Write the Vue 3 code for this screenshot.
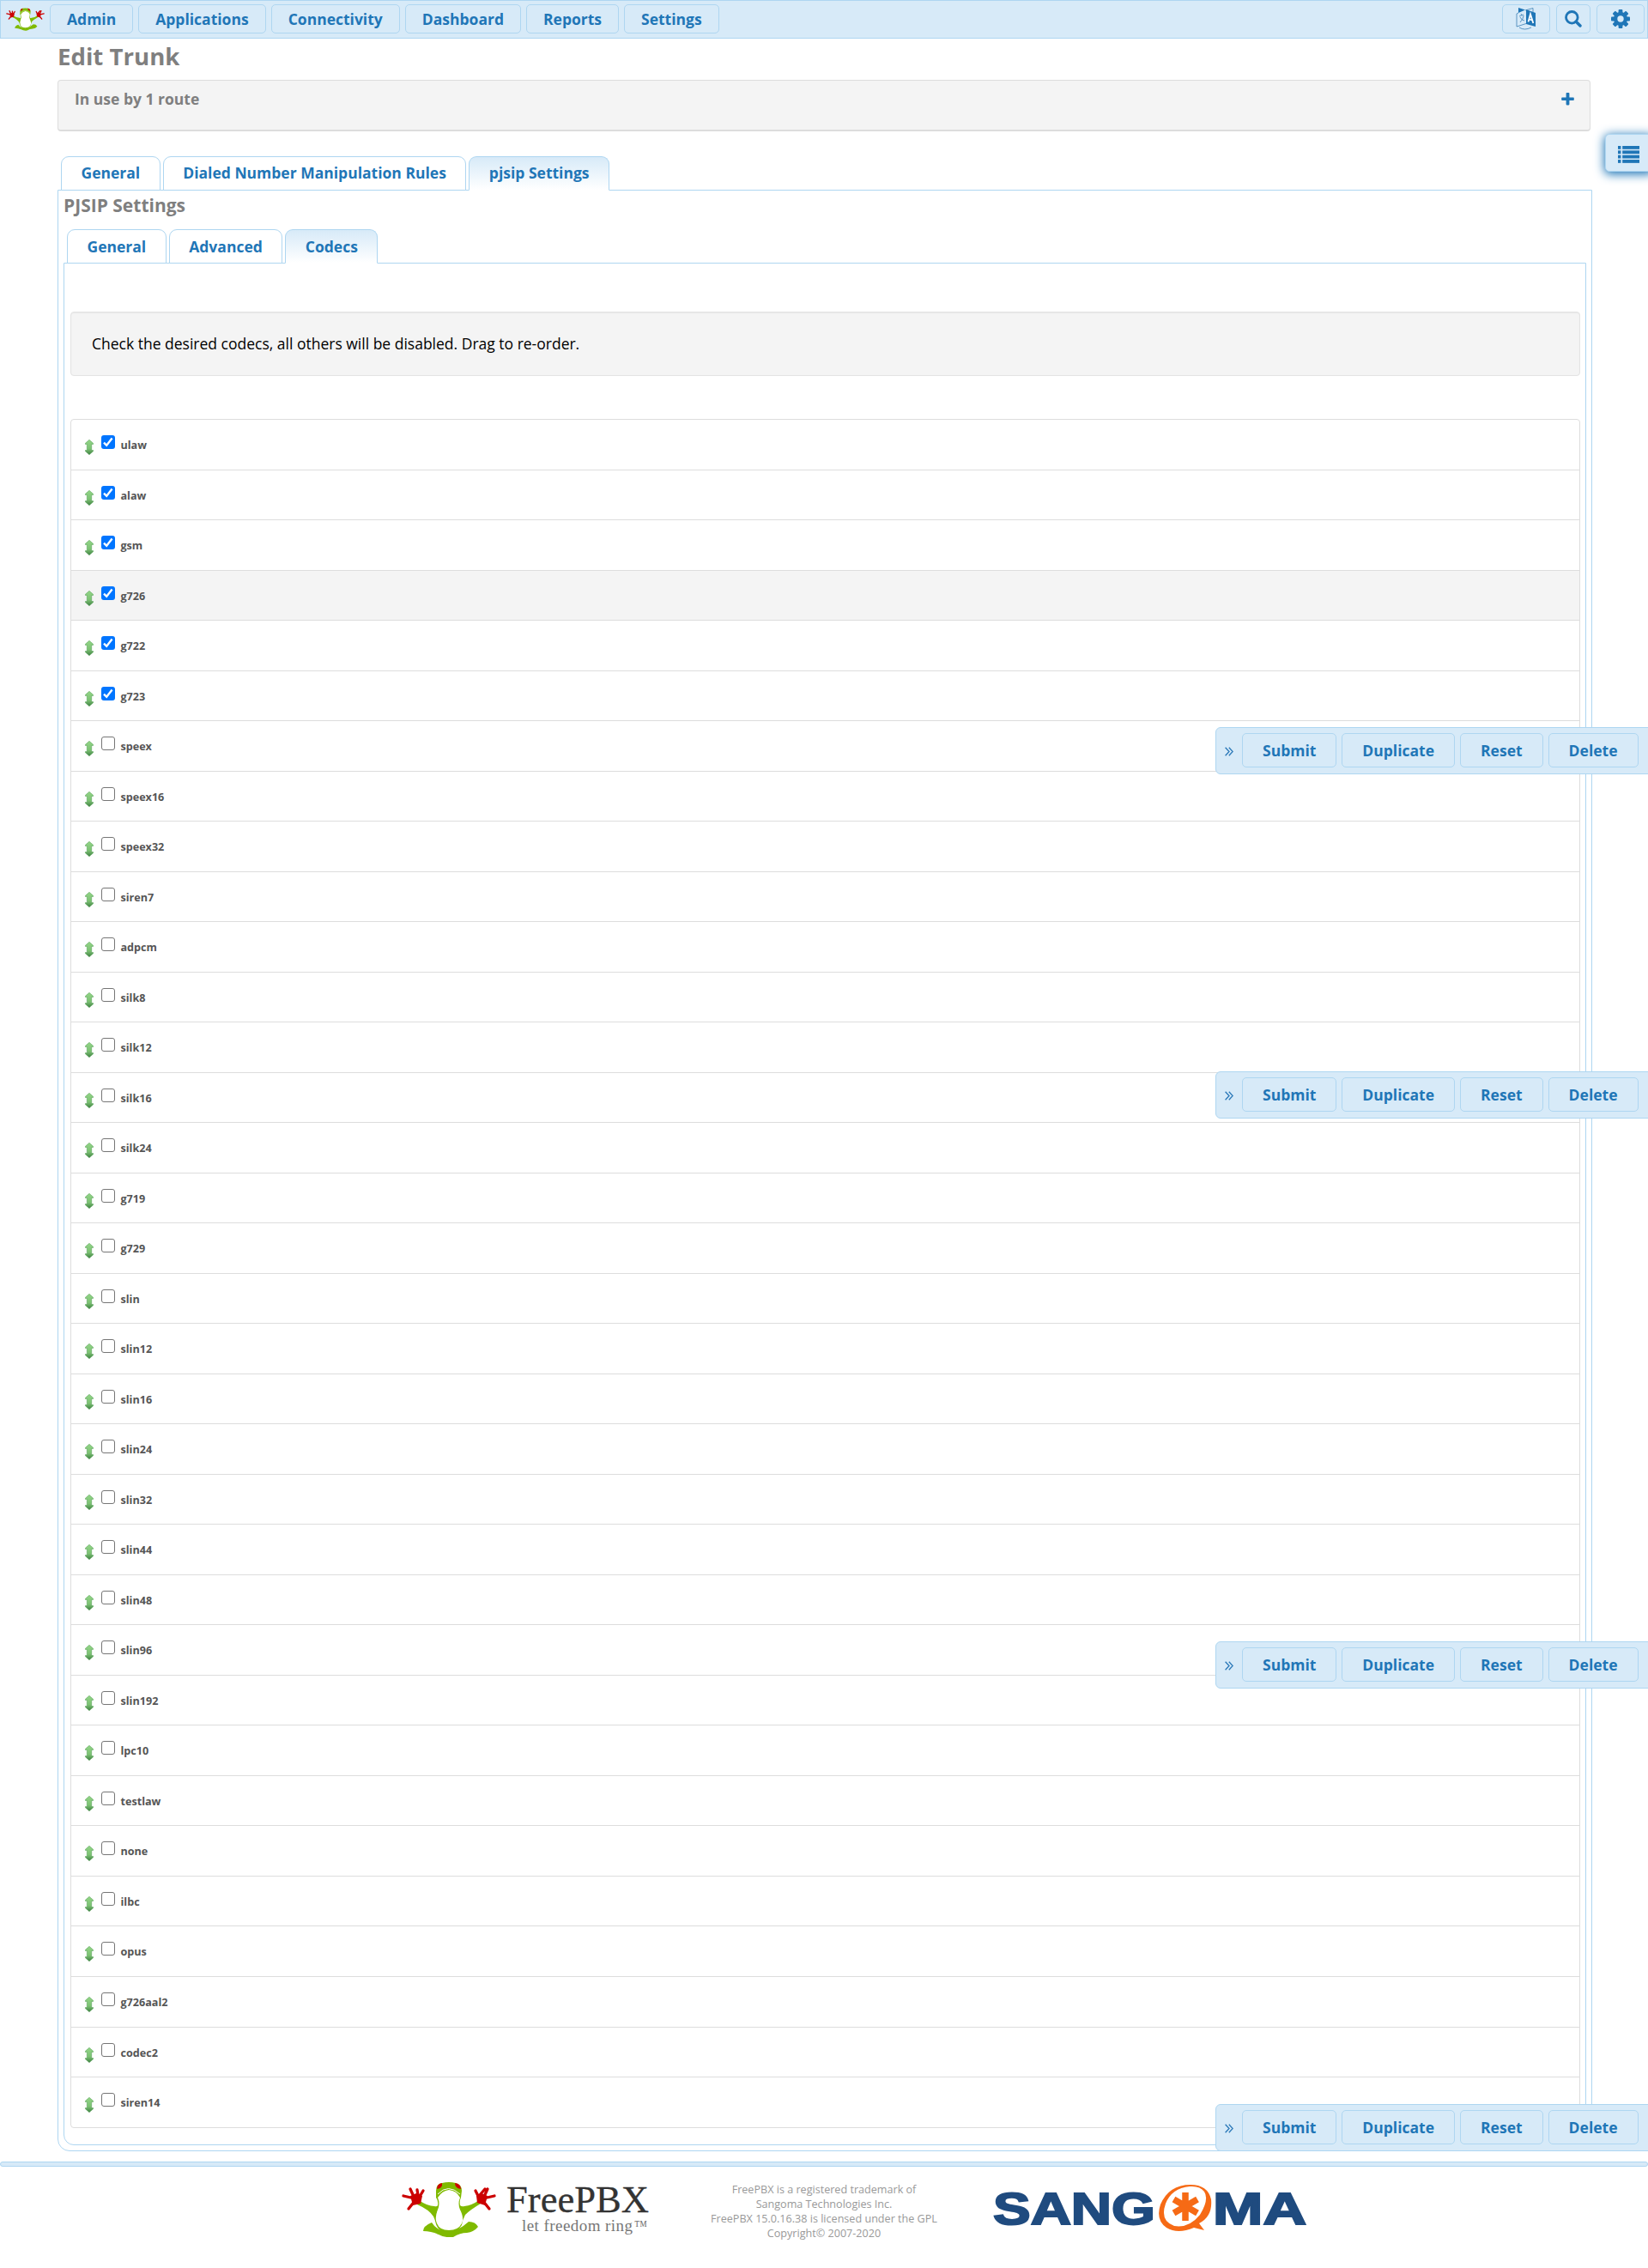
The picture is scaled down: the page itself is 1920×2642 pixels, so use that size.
<script setup>
const menu = ['Admin', 'Applications', 'Connectivity', 'Dashboard', 'Reports', 'Settings']
const trunkTabs = ['General', 'Dialed Number Manipulation Rules', 'pjsip Settings']
const pjsipTabs = ['General', 'Advanced', 'Codecs']
const actions = ['Submit', 'Duplicate', 'Reset', 'Delete']
const barOffsets = [847, 1248, 1912, 2451]
const enabled = ['ulaw', 'alaw', 'gsm', 'g726', 'g722', 'g723']
const codecs = [
  ...enabled, 'speex', 'speex16', 'speex32', 'siren7', 'adpcm', 'silk8', 'silk12', 'silk16',
  'silk24', 'g719', 'g729', 'slin', 'slin12', 'slin16', 'slin24', 'slin32', 'slin44', 'slin48',
  'slin96', 'slin192', 'lpc10', 'testlaw', 'none', 'ilbc', 'opus', 'g726aal2', 'codec2', 'siren14',
].map((name) => ({ name, on: enabled.includes(name) }))
</script>

<template>
  <div class="page">
    <svg width="0" height="0" class="defs">
      <defs>
        <linearGradient id="arrow" x1="0" y1="0" x2="0" y2="1">
          <stop offset="0" stop-color="#93d587" /><stop offset=".6" stop-color="#7cc273" /><stop offset="1" stop-color="#3f7f42" />
        </linearGradient>
        <symbol id="frog" viewBox="0 0 110 64">
          <path fill="#7fba00" d="M20 21 Q30 28 38 28 Q41 29 42 27 Q43 22 40 18 L40 10 Q40 2 47 1 Q55 -1 63 1 Q70 3 70 10 L69 18 Q67 22 68 27 Q70 29 73 28 Q82 27 90 21 L92 25 Q80 32 74 38 Q71 43 70 50 Q64 60 55 59 Q44 60 40 49 Q39 44 37 40 Q32 32 18 26 Z" />
          <path fill="#7fba00" d="M25 57 Q25 51 35 47 Q41 57 55 58 Q67 56 78 46 Q86 46 89 52 Q84 58 76 59 Q68 59 60 64 Q50 65 43 61 Q35 57 25 57 Z" />
          <path fill="#fff" d="M42 18 Q47 10 55 9 Q64 10 68 18 Q65 25 68 32 Q73 42 70 48 Q66 56 55 56 Q44 56 41 48 Q38 42 42 32 Q45 25 42 18 Z" />
          <path fill="none" stroke="#fff" stroke-width="1" d="M42 14 Q54 1 68 14" />
          <path fill="#c00" d="M41 8 Q41 2 47 1 Q48 7 41 8 M69 8 Q69 2 62 1 Q62 7 69 8" />
          <g fill="none" stroke="#c00" stroke-width="3.3" stroke-linecap="round" stroke-linejoin="round">
            <path d="M2 16 L15 19 L10 8 M17 17 L19 15 L18 9 M19 20 L25 10 M16 21 L8 31" />
            <path d="M108 16 L95 19 L100 8 M93 17 L91 15 L97 8 M91 20 L86 10 M94 21 L102 31" />
          </g>
          <path fill="#c00" d="M10 16 L17 13 L24 16 L22 25 L13 27 Z M100 16 L93 13 L87 16 L88 24 L97 27 Z" />
        </symbol>
      </defs>
    </svg>

    <header class="nav">
      <svg class="nav-frog"><use href="#frog" /></svg>
      <nav class="menu"><a v-for="m in menu" :key="m" class="btn">{{ m }}</a></nav>
      <div class="tools">
        <a class="tool wide">
          <svg width="24" height="26" viewBox="0 0 24 26">
            <path fill="#1f76b7" d="M3 0 L11 2.5 L3 6Z M12 2 L23 6 V22 L12 19Z" />
            <path fill="none" stroke="#3b7fb4" stroke-width=".8" d="M11 3 L20 .5 V5 M3 6 L1 7 V22 L12 18.5 M4 23 Q10 27 18 23 M4 10 L9 8 M6 7 L7 9 M5 17 Q9 13 9 9 M5 11 Q7 15 10 15" />
            <path fill="none" stroke="#fff" stroke-width="1.8" d="M14.5 16.5 L17 7.5 L20.3 18 M15.5 13.5 L19 14.5" />
          </svg>
        </a>
        <a class="tool">
          <svg width="20" height="20" viewBox="0 0 20 20" fill="none" stroke="#1f76b7"><circle cx="8.3" cy="8.3" r="6.8" stroke-width="2.8" /><path d="M13.2 13.2 L18 18" stroke-width="3.4" stroke-linecap="round" /></svg>
        </a>
        <a class="tool wide">
          <svg width="22" height="22" viewBox="-11 -11 22 22">
            <g fill="#1f76b7"><rect v-for="a in 4" :key="a" x="-2.4" y="-11" width="4.8" height="22" rx="1" :transform="`rotate(${a * 45})`" /></g>
            <circle r="5.9" fill="none" stroke="#1f76b7" stroke-width="4.4" /><circle r="3.7" fill="#d7eaf8" />
          </svg>
        </a>
      </div>
    </header>

    <main class="content">
      <h1>Edit Trunk</h1>
      <section class="usage">
        <span>In use by 1 route</span>
        <svg width="15" height="15" viewBox="0 0 15 15"><path fill="#1f76b7" d="M5.6 .8 Q5.6 0 6.4 0 H8.6 Q9.4 0 9.4 .8 V5.4 H14 Q14.8 5.4 14.8 6.2 V8.2 Q14.8 9 14 9 H9.4 V13.6 Q9.4 14.4 8.6 14.4 H6.4 Q5.6 14.4 5.6 13.6 V9 H1 Q.2 9 .2 8.2 V6.2 Q.2 5.4 1 5.4 H5.6Z" /></svg>
      </section>

      <ul class="tabs outer">
        <li v-for="(t, i) in trunkTabs" :key="t" :class="{ active: i === 2 }">{{ t }}</li>
      </ul>
      <section class="pane">
        <h2>PJSIP Settings</h2>
        <ul class="tabs inner">
          <li v-for="(t, i) in pjsipTabs" :key="t" :class="{ active: i === 2 }">{{ t }}</li>
        </ul>
        <div class="subpane">
          <div class="well">Check the desired codecs, all others will be disabled. Drag to re-order.</div>
          <ul class="codecs">
            <li v-for="c in codecs" :key="c.name" :class="{ hover: c.name === 'g726' }">
              <svg class="drag" width="10" height="18" viewBox="0 0 10 18"><path fill="url(#arrow)" stroke="#4f9a50" stroke-width=".5" d="M5 .3 L9.7 4.4 V5.400 H7.700 V12.600 H9.7 V13.600 L5 17.7 L.3 13.600 V12.600 H2.300 V5.400 H.3 V4.4Z" /></svg>
              <span class="check" :class="{ on: c.on }">
                <svg v-if="c.on" width="16" height="16" viewBox="0 0 16 16"><path fill="none" stroke="#fff" stroke-width="2.4" d="M3 8.6 L6.2 11.8 L12.6 3.6" /></svg>
              </span>
              <span class="name">{{ c.name }}</span>
            </li>
          </ul>
        </div>
      </section>
    </main>

    <footer>
      <div class="stripe"></div>
      <div class="brand">
        <svg class="freepbx" width="292" height="70" viewBox="0 0 292 70">
          <use href="#frog" x="0" y="0" width="110" height="64" />
          <g font-family="'Liberation Serif', serif">
            <text x="122" y="34.5" font-size="44" fill="#333" stroke="#333" stroke-width=".3" textLength="166" lengthAdjust="spacingAndGlyphs">FreePBX</text>
            <text x="140" y="57" font-size="19" fill="#777" textLength="129" lengthAdjust="spacing">let freedom ring</text>
            <text x="271" y="57" font-size="18" fill="#777" textLength="15" lengthAdjust="spacingAndGlyphs">™</text>
          </g>
        </svg>
        <p>FreePBX is a registered trademark of<br>Sangoma Technologies Inc.<br>FreePBX 15.0.16.38 is licensed under the GPL<br>Copyright© 2007-2020</p>
        <svg class="sangoma" width="366" height="60" viewBox="0 0 366 60">
          <g font-family="'Liberation Sans', sans-serif" font-weight="700" font-size="52" fill="#1f4b7f" stroke="#1f4b7f" stroke-width="2">
            <text x="0" y="48.500" textLength="189" lengthAdjust="spacingAndGlyphs">SANG</text>
            <text x="256" y="48.500" textLength="109" lengthAdjust="spacingAndGlyphs">MA</text>
          </g>
          <path fill="#f66a15" fill-rule="evenodd" d="M230 3 Q250 3 254 20 Q256 40 240 48 L246 56 L234 53 Q215 61 202 53 Q189 44 195 26 Q205 3 230 3Z M229 5 Q208 7 201 25 Q194 45 211 51 Q228 54 241 38 Q252 20 246 11 Q241 4 229 5Z" />
          <g stroke="#f66a15" stroke-width="7.5"><path d="M224 12 V45 M210.500 20 L238 36 M238 20 L210.500 36" /></g>
        </svg>
      </div>
    </footer>

    <a class="side-toggle">
      <svg width="25" height="20" viewBox="0 0 25 20" fill="#1f76b7"><g v-for="n in 4" :key="n"><rect x="0" :y="(n - 1) * 5.35" width="3.4" height="3.8" /><rect x="5.200" :y="(n - 1) * 5.35" width="19.8" height="3.8" /></g></svg>
    </a>
    <div v-for="y in barOffsets" :key="y" class="actions" :style="{ top: y + 'px' }">
      <svg width="10" height="11" viewBox="0 0 10 11" fill="none" stroke="#2a78b8" stroke-width="1.3"><path d="M.6 .8 L5 5.500 L.6 10.200 M4.800 .8 L9.200 5.500 L4.800 10.200" /></svg>
      <a v-for="a in actions" :key="a" class="btn">{{ a }}</a>
    </div>
  </div>
</template>

<style>
body { margin: 0; background: #fff; }
</style>

<style scoped>
* { box-sizing: border-box; }
.page { position: relative; width: 1920px; height: 2642px; overflow: hidden; background: #fff; font-family: "Open Sans", sans-serif; font-size: 17.5px; line-height: 26px; color: #000; }
.defs { position: absolute; }
ul, h1, h2, p { margin: 0; padding: 0; list-style: none; }
.nav { display: flex; align-items: flex-start; height: 45px; padding: 4px 3px 0 6px; background: #d7eaf8; border: 1px solid #aed6f1; }
.nav-frog { width: 45px; height: 27px; margin: 4px 6px 0 0; }
.menu { display: flex; gap: 6px; }
.btn { display: block; height: 34px; padding: 0 19px; border: 1px solid #aed6f1; border-radius: 5px; font-weight: 700; line-height: 33px; color: #1f76b7; white-space: nowrap; }
.tools { display: flex; gap: 7px; margin-left: auto; }
.tool { display: flex; align-items: center; justify-content: center; width: 40px; height: 34px; border: 1px solid #aed6f1; border-radius: 5px; }
.tool.wide { width: 56px; }
.content { padding: 0 65px 0 67px; }
h1 { height: 48px; font-size: 27.6px; font-weight: 700; line-height: 40px; color: #7f7f7f; }
.usage { display: flex; justify-content: space-between; width: 1786px; height: 60px; padding: 8px 18px 0 19px; border: 1px solid #ddd; border-bottom-width: 2px; border-radius: 4px; background: #f4f4f4; font-weight: 700; color: #7f7f7f; }
.usage svg { margin-top: 6px; }
.tabs { position: relative; z-index: 1; display: flex; gap: 3px; margin-left: 4px; margin-bottom: -1px; }
.tabs li { height: 40px; padding: 0 22.5px; border: 1px solid #aed6f1; border-radius: 9px 9px 0 0; background: #fff; font-weight: 700; line-height: 37px; color: #1f76b7; }
.tabs li.active { background: linear-gradient(#d7eaf8, #fff); border-bottom-color: #fff; }
.outer { margin-top: 29px; }
.inner li { line-height: 38px; }
.pane { width: 1788px; height: 2285px; padding: 0 6px; border: 1px solid #aed6f1; border-radius: 0 0 14px 14px; }
h2 { height: 45px; font-size: 21px; font-weight: 700; line-height: 35px; color: #7f7f7f; }
.subpane { width: 1774px; height: 2193px; padding: 56px 6px 0 7px; border: 1px solid #aed6f1; border-radius: 0 0 12px 12px; }
.well { height: 75px; margin-bottom: 50px; padding: 23px 24px; border: 1px solid #e3e3e3; border-radius: 4px; background: #f4f4f4; box-shadow: inset 0 1px 1px rgba(0,0,0,.05); }
.codecs { display: flex; flex-direction: column; }
.codecs li { display: flex; height: 59.52px; flex: none; margin-bottom: -1px; padding-left: 16px; border: 1px solid #ddd; background: #fff; }
.codecs li:first-child { border-radius: 4px 4px 0 0; }
.codecs li:last-child { border-radius: 0 0 4px 4px; }
.codecs li.hover { background: #f4f4f4; }
.drag { margin-top: 23px; }
.check { width: 16px; height: 16px; margin: 18px 6.5px 0 9px; border: 1px solid #767676; border-radius: 3px; }
.check.on { border: 0; background: #0075ff; }
.check svg { display: block; }
.name { margin-top: 17px; font-size: 12.6px; font-weight: 700; color: #555; line-height: 26px; }
.stripe { height: 6px; margin-top: 12px; border: 1px solid #aed6f1; border-radius: 3px; background: #d7eaf8; }
.brand { display: flex; padding-left: 468px; }
.freepbx { margin-top: 18px; overflow: visible; }
.brand p { width: 400px; margin-top: 18px; font-size: 12.6px; line-height: 17px; text-align: center; color: #999; }
.sangoma { margin: 18px 0 0 -3px; }
.side-toggle { position: absolute; top: 156px; right: -6px; width: 56px; height: 44px; padding: 13px 0 0 14px; border: 1px solid #aed6f1; border-radius: 5px; background: #d7eaf8; box-shadow: 0 2px 12px 1px #1f76b7; }
.actions { position: absolute; left: 1416px; display: flex; gap: 6px; width: 520px; height: 55px; padding: 6px 0 0 10px; border: 1px solid #aed6f1; border-radius: 6px; background: #d7eaf8; }
.actions svg { margin: 16px 4px 0 0; }
.actions .btn { height: 40px; padding: 0 23px; line-height: 39px; }
</style>
